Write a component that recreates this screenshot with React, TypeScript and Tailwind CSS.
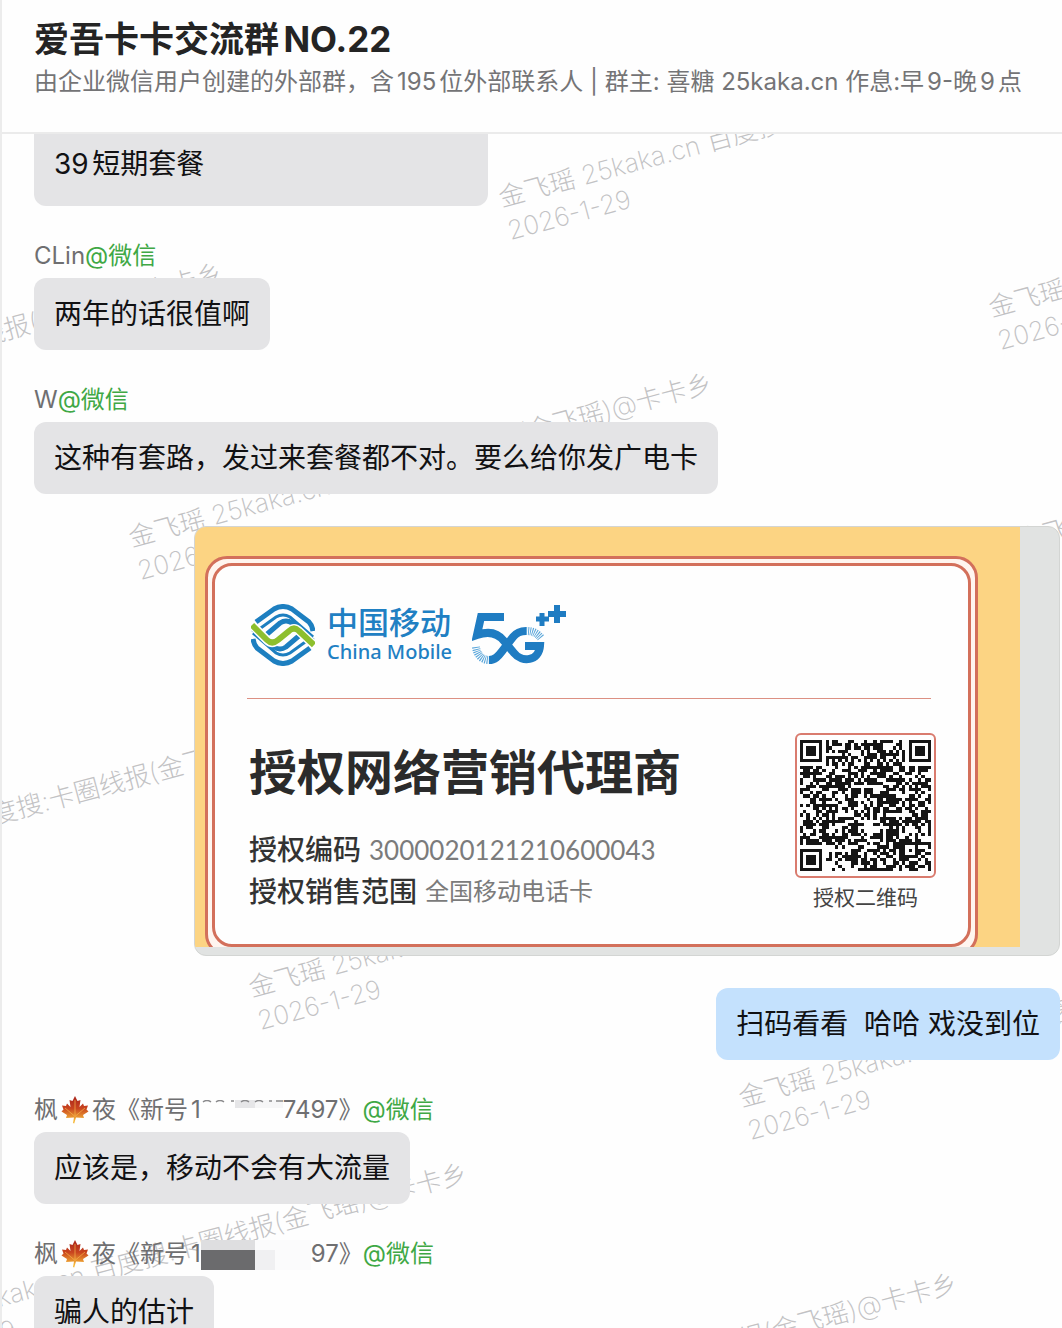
import type { ReactNode } from "react";

const WATERMARK = "金飞瑶 25kaka.cn 百度搜:卡圈线报(金飞瑶)@卡卡乡";
const WATERMARK_DATE = "2026-1-29";

const watermarks = [
  { left: 493, top: 182 },
  { left: 983, top: 292 },
  { left: -367, top: 412 },
  { left: 123, top: 522 },
  { left: 613, top: 632 },
  { left: -247, top: 862 },
  { left: 243, top: 972 },
  { left: 733, top: 1082 },
  { left: -122, top: 1312 },
  { left: 368, top: 1422 },
];

function Watermarks() {
  return (
    <div
      aria-hidden="true"
      className="pointer-events-none absolute inset-0 overflow-hidden font-extralight text-[#c2c2c4]"
    >
      {watermarks.map((mark) => (
        <div
          key={`${mark.left}-${mark.top}`}
          className="absolute origin-top-left -rotate-15 text-[26px] leading-[34px] whitespace-nowrap"
          style={{ left: mark.left, top: mark.top - 134 }}
        >
          <p>{WATERMARK}</p>
          <p>{WATERMARK_DATE}</p>
        </div>
      ))}
    </div>
  );
}

function MapleLeaf() {
  return (
    <svg viewBox="0 0 28 30" className="mx-[3px] h-[30px] w-[28px]" aria-label="枫叶" role="img">
      <defs>
        <linearGradient id="leaf" x1="0" y1="0" x2="0" y2="1">
          <stop offset="0" stopColor="#a8241c" />
          <stop offset="0.45" stopColor="#c9441f" />
          <stop offset="0.9" stopColor="#f6b838" />
        </linearGradient>
      </defs>
      <path
        fill="url(#leaf)"
        d="M14 1 L16.5 6 L19.5 5 L18.5 12 L22 8.5 L23 11 L27 10.5 L25.5 14.5 L27.5 16.5 L22 20 L23 23 L15 22.5 L13.2 28.5 L12 28 L13 22.5 L5 23 L6 20 L0.5 16.5 L2.5 14.5 L1 10.5 L5 11 L6 8.5 L9.5 12 L8.5 5 L11.5 6 Z"
      />
      <path
        fill="none"
        stroke="#f5b54a"
        strokeWidth="0.7"
        d="M14 5 L14 22 M13.5 21 L4 13 M14.5 21 L24 13"
      />
    </svg>
  );
}

function Sender({ children }: { children: ReactNode }) {
  return (
    <div className="mb-1 flex h-9 items-center text-[24px] leading-9 whitespace-nowrap text-[#6f6f71]">
      {children}
      <span className="text-[#3fa845]">@微信</span>
    </div>
  );
}

function Bubble({ children }: { children: ReactNode }) {
  return (
    <p className="w-fit rounded-xl bg-[#e4e4e6] px-5 py-4 text-[28px] leading-10 text-[#111113]">
      {children}
    </p>
  );
}

function ChinaMobileMark() {
  return (
    <svg viewBox="0 0 64 62" className="h-[62px] w-[64px]" fill="none" aria-hidden="true">
      <g stroke="#1d7fc0">
        <path d="M5 18 L23 5 Q32 0 41 5 L58 18 Q61 21 62 27" strokeWidth="5" />
        <path d="M7 26 L25 13 Q32 9 39 13 L62 33" strokeWidth="3" />
        <path d="M15 31 L29 19 Q35 15 41 19 L62 37" strokeWidth="5" />
        <path d="M59 44 L41 57 Q32 62 23 57 L6 44 Q3 41 2 35" strokeWidth="5" />
        <path d="M57 36 L39 49 Q32 53 25 49 L2 29" strokeWidth="3" />
        <path d="M49 31 L35 43 Q29 47 23 43 L2 25" strokeWidth="5" />
      </g>
      <path
        d="M1 21 L16 36 Q21 41 27 36 L38 27 Q43 22 48 27 L63 41"
        stroke="#fefefe"
        strokeWidth="9"
      />
      <path
        d="M1 21 L16 36 Q21 41 27 36 L38 27 Q43 22 48 27 L63 41"
        stroke="#8dbf2e"
        strokeWidth="6"
      />
    </svg>
  );
}

function FiveGMark() {
  return (
    <svg viewBox="0 0 94 62" className="h-[62px] w-[94px]" fill="none" role="img" aria-label="5G++">
      <g stroke="#1f7cc2" strokeWidth="8">
        <path d="M17 56 C24 56 27 51 31 46 L41 33 C45 28 49 27 54 27" />
        <path d="M32 13 H9 L5 31 C16 27 25 28 32 37 L42 49 C50 59 67 57 68 42 H53" />
      </g>
      <g stroke="#5aa6da" strokeWidth="8" strokeDasharray="1 1">
        <path d="M4 43 C5 51 10 56 17 56" />
        <path d="M54 27 C61 27 65 29 69 34" />
      </g>
      <path d="M64 15 H77 M70 9 V22" stroke="#1f7cc2" strokeWidth="5" />
      <path d="M76 10 H94 M85 1 V19" stroke="#1f7cc2" strokeWidth="6" />
    </svg>
  );
}

const QR_SIZE = 41;

function finder(x: number, y: number) {
  const edge = Math.max(Math.abs(x - 3), Math.abs(y - 3));
  return edge === 3 || edge <= 1;
}

function buildQr() {
  let seed = 20121;
  let path = "";
  for (let y = 0; y < QR_SIZE; y++) {
    for (let x = 0; x < QR_SIZE; x++) {
      seed = (seed * 16807) % 2147483647;
      let dark = seed / 2147483647 < 0.54;
      const fx = x > 32 ? QR_SIZE - 1 - x : x;
      const fy = y > 32 ? QR_SIZE - 1 - y : y;
      if (fx < 8 && fy < 8 && !(x > 32 && y > 32)) {
        dark = fx < 7 && fy < 7 && finder(fx, fy);
      } else if (Math.abs(x - 34) <= 2 && Math.abs(y - 34) <= 2) {
        dark = Math.max(Math.abs(x - 34), Math.abs(y - 34)) !== 1;
      } else if (x === 6 || y === 6) {
        dark = (x + y) % 2 === 0;
      }
      if (dark) path += `M${x} ${y}h1v1h-1z`;
    }
  }
  return path;
}

const qrPath = buildQr();

function LicencePicture() {
  return (
    <figure className="ml-auto w-[866px] max-w-full overflow-hidden rounded-xl border border-[#d3d5d3] bg-[#e1e3e2] pb-2">
      <div className="h-[420px] w-[825px] overflow-hidden bg-[#fcd483] pt-[29px] pl-[10px]">
        <div className="h-[400px] w-[773px] rounded-[22px] border-3 border-[#d3705b] bg-[#fff5ef] p-1">
          <div className="h-[384px] rounded-[20px] border-3 border-[#d3705b] bg-[#fefefe] px-8 pt-9">
            <div className="flex h-[66px] items-center">
              <div className="ml-1">
                <ChinaMobileMark />
              </div>
              <div className="ml-3 text-[#1f80c3]">
                <p className="text-[31px] leading-[34px] font-medium">中国移动</p>
                <p className="font-['Noto_Sans',sans-serif] text-[20px] leading-6 font-medium">
                  China Mobile
                </p>
              </div>
              <div className="ml-5">
                <FiveGMark />
              </div>
            </div>
            <hr className="mt-[30px] w-[684px] border-[#dc9083]" />
            <div className="flex justify-between">
              <div className="pt-11 pl-[2px]">
                <h2 className="text-[48px] leading-[60px] font-bold text-[#2b2b2b]">
                  授权网络营销代理商
                </h2>
                <p className="mt-[26px] flex items-center gap-2 text-[28px] leading-[42px] font-medium text-[#333]">
                  授权编码
                  <span className="font-[Lato,sans-serif] text-[26px] font-normal text-[#7b7b7b]">
                    3000020121210600043
                  </span>
                </p>
                <p className="flex items-center gap-2 text-[28px] leading-[42px] font-medium text-[#333]">
                  授权销售范围
                  <span className="text-[24px] font-normal text-[#7b7b7b]">全国移动电话卡</span>
                </p>
              </div>
              <div className="flex flex-col items-center pt-[34px]">
                <svg
                  viewBox="0 0 41 41"
                  className="h-[145px] w-[141px] rounded-md border-2 border-[#d97b6e] p-[3px]"
                  role="img"
                  aria-label="授权二维码"
                >
                  <path d={qrPath} fill="#151515" shapeRendering="crispEdges" />
                </svg>
                <figcaption className="mt-1 text-[21px] leading-8 text-[#444]">
                  授权二维码
                </figcaption>
              </div>
            </div>
          </div>
        </div>
      </div>
    </figure>
  );
}

function App() {
  return (
    <div className="flex h-screen flex-col overflow-hidden border-l-2 border-[#ececec] bg-[#fefefe] font-[Inter,'Noto_Sans_CJK_SC',sans-serif] [text-autospace:normal]">
      <header className="shrink-0 border-b-2 border-[#ebebeb] px-8 pt-4 pb-[30px]">
        <h1 className="text-[35px] leading-[46px] font-bold text-[#242424]">爱吾卡卡交流群NO.22</h1>
        <p className="text-[24px] leading-10 whitespace-nowrap text-[#747476]">
          由企业微信用户创建的外部群，含195位外部联系人 | 群主: 喜糖 25kaka.cn 作息:早9-晚9点
        </p>
      </header>

      <main className="relative grow overflow-hidden">
        <Watermarks />
        <div className="relative flex flex-col gap-8 pr-[2px] pl-8">
          <p className="w-[454px] rounded-b-xl bg-[#e4e4e6] px-5 pt-[10px] pb-[22px] text-[28px] leading-10 text-[#111113]">
            39短期套餐
          </p>
          <section>
            <Sender>CLin</Sender>
            <Bubble>两年的话很值啊</Bubble>
          </section>
          <section>
            <Sender>W</Sender>
            <Bubble>这种有套路，发过来套餐都不对。要么给你发广电卡</Bubble>
          </section>
          <LicencePicture />
          <p className="ml-auto w-fit rounded-xl bg-[#c4e1fd] px-5 py-4 text-[28px] leading-10 whitespace-pre text-[#111113]">
            扫码看看{"  "}哈哈 戏没到位
          </p>
          <section>
            <Sender>
              枫
              <MapleLeaf />
              夜《新号1
              <svg viewBox="0 0 82 20" className="h-5 w-[82px]" aria-hidden="true">
                <rect x="34" y="0" width="20" height="8" fill="#e6e6e8" />
                <rect x="54" y="0" width="28" height="8" fill="#f6f6f7" />
                <path
                  d="M2 2q4-3 8 0M15 2q4-3 8 0M30 1h3M40 2q4-3 8 0M54 2q4-3 8 0M68 1h3M75 1h7"
                  fill="none"
                  stroke="#8a8a8c"
                  strokeWidth="1.5"
                />
              </svg>
              7497》
            </Sender>
            <Bubble>应该是，移动不会有大流量</Bubble>
          </section>
          <section>
            <Sender>
              枫
              <MapleLeaf />
              夜《新号1
              <svg viewBox="0 0 110 36" className="h-9 w-[110px]" aria-hidden="true">
                <rect x="0" y="4" width="110" height="30" fill="#fbfbfc" />
                <rect x="0" y="4" width="54" height="10" fill="#dedee0" />
                <rect x="0" y="14" width="54" height="20" fill="#6b6b6d" />
                <rect x="54" y="14" width="20" height="20" fill="#f0f0f2" />
              </svg>
              97》
            </Sender>
            <Bubble>骗人的估计</Bubble>
          </section>
        </div>
      </main>
    </div>
  );
}

export default App;
